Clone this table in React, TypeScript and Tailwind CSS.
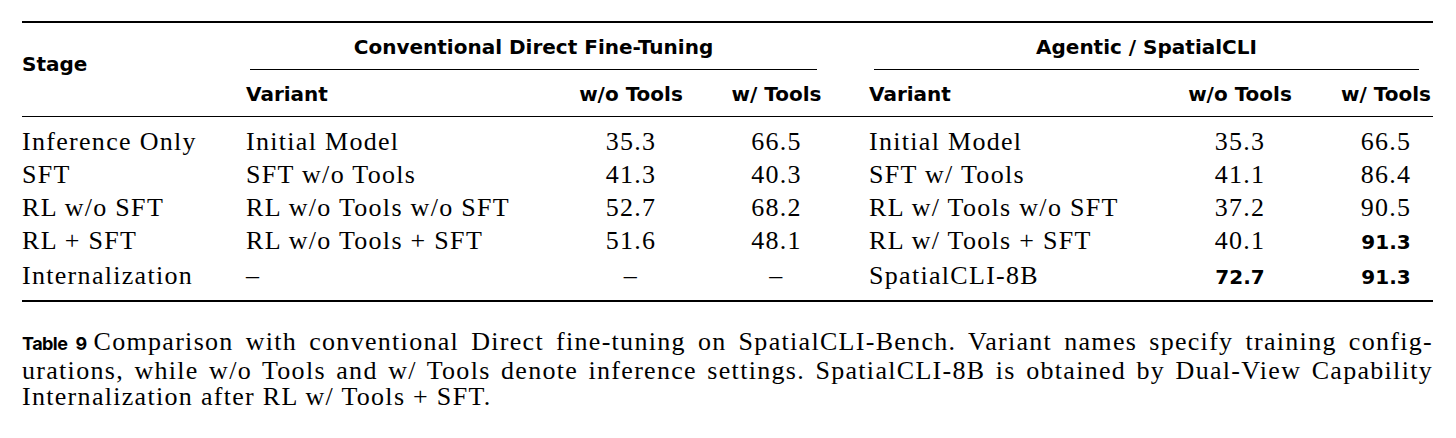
type Cell = { text: string; bold?: boolean };

const sans = "[font-family:'DejaVu_Sans',sans-serif] font-bold text-[20px]";
const serif = "[font-family:'Liberation_Serif',serif] text-[26px] tracking-[0.05em]";

const rows: Cell[][] = [
    [{ text: "Inference Only" }, { text: "Initial Model" }, { text: "35.3" }, { text: "66.5" }, { text: "Initial Model" }, { text: "35.3" }, { text: "66.5" }],
    [{ text: "SFT" }, { text: "SFT w/o Tools" }, { text: "41.3" }, { text: "40.3" }, { text: "SFT w/ Tools" }, { text: "41.1" }, { text: "86.4" }],
    [{ text: "RL w/o SFT" }, { text: "RL w/o Tools w/o SFT" }, { text: "52.7" }, { text: "68.2" }, { text: "RL w/ Tools w/o SFT" }, { text: "37.2" }, { text: "90.5" }],
    [{ text: "RL + SFT" }, { text: "RL w/o Tools + SFT" }, { text: "51.6" }, { text: "48.1" }, { text: "RL w/ Tools + SFT" }, { text: "40.1" }, { text: "91.3", bold: true }],
    [{ text: "Internalization" }, { text: "–" }, { text: "–" }, { text: "–" }, { text: "SpatialCLI-8B" }, { text: "72.7", bold: true }, { text: "91.3", bold: true }],
];

const cols = "grid grid-cols-[224px_326px_118px_173px_318px_118px_134px]";

const Value: React.FC<{ cell: Cell }> = ({ cell }) =>
    cell.bold ? (
        <span className="[font-family:'DejaVu_Sans',sans-serif] text-[20px] font-bold tracking-normal">{cell.text}</span>
    ) : (
        <>{cell.text}</>
    );

export default function App() {
    return (
        <div className="h-[438px] w-[1456px] bg-white pl-[22px] pt-[21px] text-black">
            <div className="w-[1411px]">
                <div className="h-[2px] bg-black" />

                <div className={`${cols} ${sans} leading-[30px]`}>
                    <div className="row-span-2 pt-[26px]">Stage</div>
                    <div className="col-span-3 pt-[9px]">
                        <div className="ml-[4px] mr-[46px]">
                            <div className="text-center">Conventional Direct Fine-Tuning</div>
                            <div className="mt-[7px] h-px bg-black" />
                        </div>
                    </div>
                    <div className="col-span-3 pt-[9px]">
                        <div className="ml-[11px] mr-[14px]">
                            <div className="text-center">Agentic / SpatialCLI</div>
                            <div className="mt-[7px] h-px bg-black" />
                        </div>
                    </div>
                    <div className="pt-[9px] pb-[7px]">Variant</div>
                    <div className="pt-[9px] pb-[7px] text-center">w/o Tools</div>
                    <div className="pt-[9px] pb-[7px] text-center">w/ Tools</div>
                    <div className="pl-[6px] pt-[9px] pb-[7px]">Variant</div>
                    <div className="pt-[9px] pb-[7px] text-center">w/o Tools</div>
                    <div className="pt-[9px] pb-[7px]">
                        <div className="ml-auto w-[94px] text-center">w/ Tools</div>
                    </div>
                </div>

                <div className="h-px bg-black" />

                <div className={`${cols} ${serif} pt-[8px] pb-[6px] leading-[33px]`}>
                    {rows.map((row, i) => (
                        <div key={i} className="contents">
                            <div>{row[0].text}</div>
                            <div>{row[1].text}</div>
                            <div className="text-center"><Value cell={row[2]} /></div>
                            <div className="text-center"><Value cell={row[3]} /></div>
                            <div className="pl-[6px]">{row[4].text}</div>
                            <div className="text-center"><Value cell={row[5]} /></div>
                            <div>
                                <div className="ml-auto w-[94px] text-center"><Value cell={row[6]} /></div>
                            </div>
                        </div>
                    ))}
                </div>

                <div className="h-[2px] bg-black" />

                {/* caption */}
                <div className={`${serif} mt-[27px] leading-[26.5px]`}>
                    <div className="text-justify [text-align-last:justify]">
                        <span className="mr-[7px] [font-family:Inter,sans-serif] text-[18px] font-bold tracking-[-0.03em]">Table 9</span>
                        Comparison with conventional Direct fine-tuning on SpatialCLI-Bench. Variant names specify training config-
                    </div>
                    <div className="text-justify [text-align-last:justify]">
                        urations, while w/o Tools and w/ Tools denote inference settings. SpatialCLI-8B is obtained by Dual-View Capability
                    </div>
                    <div>Internalization after RL w/ Tools + SFT.</div>
                </div>
            </div>
        </div>
    );
}
